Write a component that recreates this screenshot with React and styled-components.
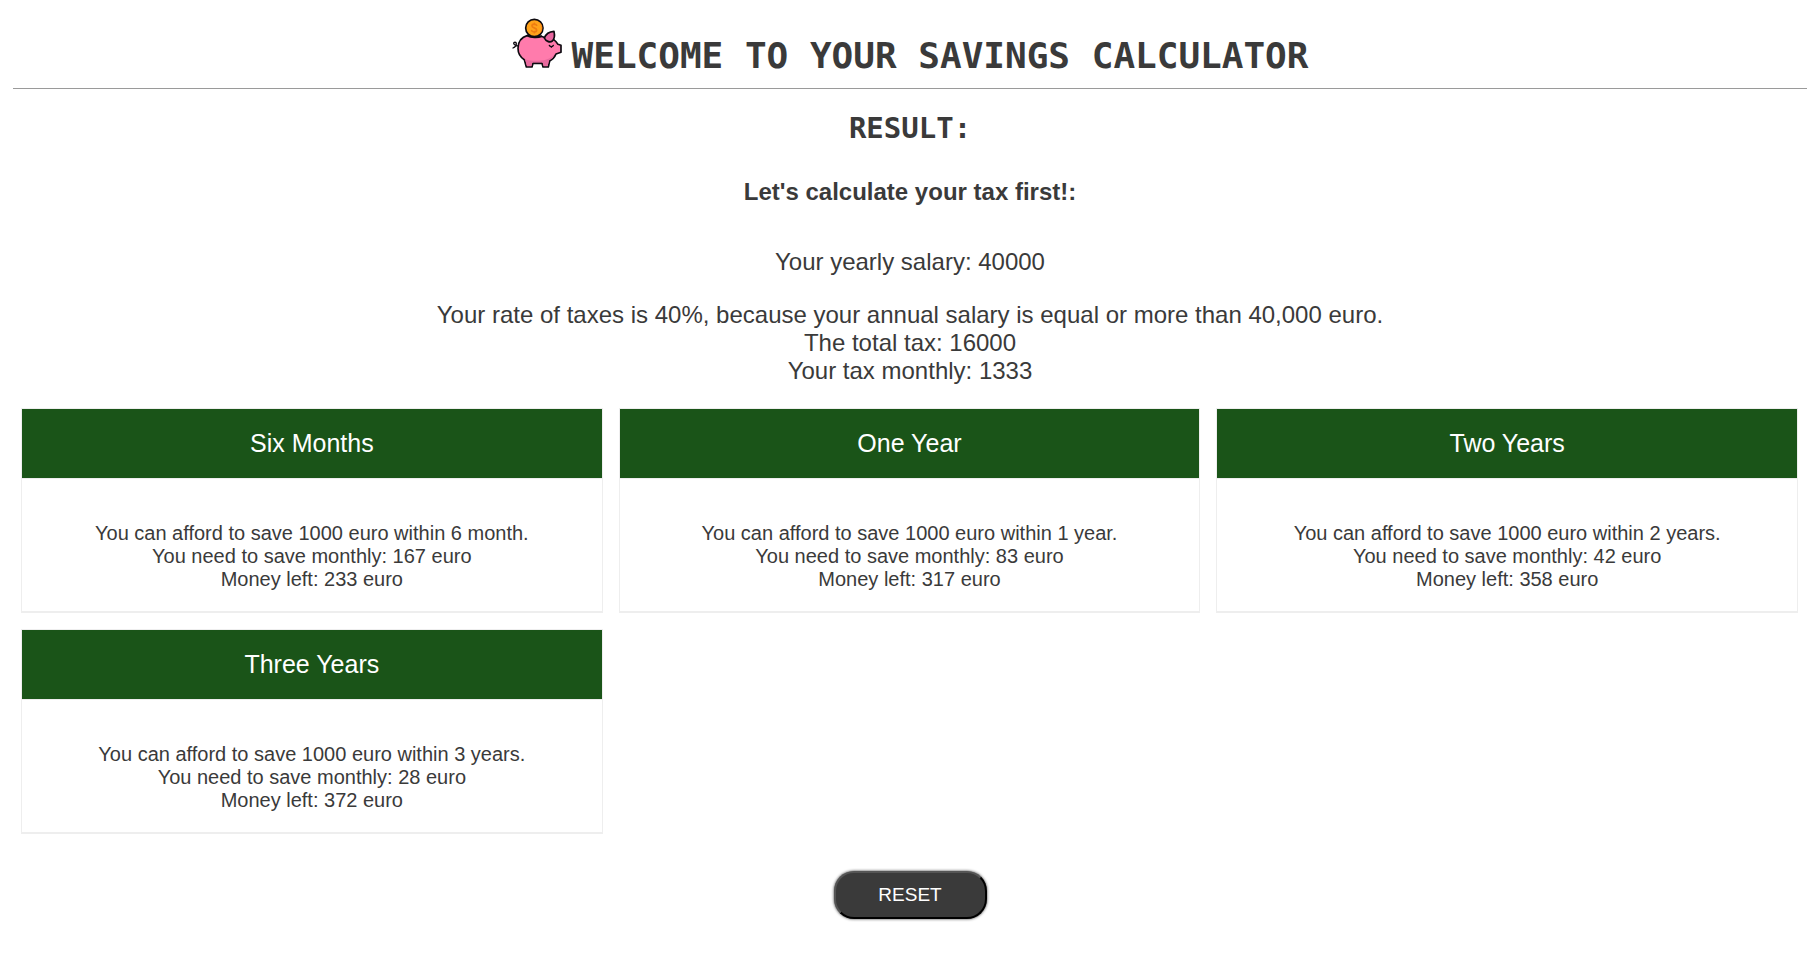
import React from 'react';
import styled, { createGlobalStyle } from 'styled-components';

const GlobalStyle = createGlobalStyle`
  * { box-sizing: border-box; }
  body {
    margin: 0;
    padding: 13px;
    background: #fff;
    color: #3a3a3a;
    font-family: 'Liberation Sans', Arial, sans-serif;
  }
`;

const Page = styled.main`
  text-align: center;
`;

const Header = styled.header`
  display: flex;
  align-items: baseline;
  justify-content: center;
  padding: 5px 0 10px;
  border-bottom: 1px solid #9a9a9a;
`;

const Title = styled.h1`
  margin: 0;
  font: bold 36px/44px 'DejaVu Sans Mono', monospace;
`;

const Pig = styled.svg`
  width: 60px;
  height: 50px;
  flex: none;
`;

const Result = styled.h2`
  margin: 21px 0 0;
  font: bold 29px/36px 'DejaVu Sans Mono', monospace;
`;

const Lead = styled.h3`
  margin: 32px 0 42px;
  font-size: 24px;
  line-height: 28px;
`;

const Text = styled.p`
  margin: 0;
  font-size: 24px;
  line-height: 28px;
`;

const TaxSummary = styled.section`
  display: grid;
  gap: 25px;
  margin-bottom: 23px;
`;

const Grid = styled.section`
  display: grid;
  grid-template-columns: repeat(3, 1fr);
  gap: 16px;
  padding: 0 9px 0 8px;
`;

const Card = styled.article`
  border: 1px solid #eee;
  border-bottom-width: 2px;
`;

const CardTitle = styled.h4`
  margin: 0;
  padding: 20px;
  border-bottom: 1px solid #eee;
  background: #1a5418;
  background-clip: padding-box;
  color: #fff;
  font-size: 25px;
  line-height: 29px;
  font-weight: 400;
`;

const CardText = styled.p`
  margin: 0;
  padding: 43px 20px 20px;
  font-size: 20px;
  line-height: 23px;
`;

const Reset = styled.button`
  display: block;
  margin: 37px auto 0;
  width: 153px;
  height: 48px;
  padding: 0;
  border: 2px solid;
  border-color: #555 #000 #000 #555;
  border-radius: 20px;
  background: #3a3a3a;
  box-shadow: 0 0 3px #333;
  color: #fff;
  font: 19px 'Liberation Sans', Arial, sans-serif;
`;

const plans = [
  ['Six Months', '6 month', 167, 233],
  ['One Year', '1 year', 83, 317],
  ['Two Years', '2 years', 42, 358],
  ['Three Years', '3 years', 28, 372],
];

function PiggyBank() {
  return (
    <Pig viewBox="36 39 180 150" aria-hidden="true" fill="none" stroke="#0d0a10" strokeWidth="5" strokeLinecap="round" strokeLinejoin="round">
      <path d="M55 122C49 124 41 119 41 115C41 111 49 110 49 116C49 122 43 127 39 129" strokeWidth="4" />
      <path
        d="M83 91C65 96 54 110 54 130C54 146 61 157 73 164L79 186H96L99 175H126L129 186H145L149 168C157 164 164 157 168 147L183 142V121L174 118C170 111 166 107 160 103L132 97C122 91 98 88 83 91Z"
        fill="#ff7bac"
      />
      <path d="M60 148C68 163 82 168 105 167C133 169 151 163 164 148C160 156 153 162 147 166L143 183H131L128 172H97L94 183H81L75 162C67 158 63 154 60 148Z" fill="#e86a9e" stroke="none" />
      <path d="M133 99C137 88 149 80 162 79C165 92 163 102 157 108C149 114 137 108 133 99Z" fill="#e8669f" />
      <path d="M148 121C151 126 157 126 160 121M154 125V127" strokeWidth="4" />
      <path d="M84 93C91 97 115 98 124 94" strokeWidth="6" />
      <circle cx="103" cy="69" r="26" fill="#ffa21a" />
      <path d="M116 50C127 61 128 78 114 90C123 85 128 77 127 67C126 59 122 53 116 50Z" fill="#ff8617" stroke="none" />
      <path d="M110 61C107 56 96 56 96 63C96 70 110 67 110 75C110 82 99 82 95 77M103 55V58M103 80V83" stroke="#ee7d12" />
    </Pig>
  );
}

export default function App() {
  return (
    <Page>
      <GlobalStyle />
      <Header>
        <PiggyBank />
        <Title>WELCOME TO YOUR SAVINGS CALCULATOR</Title>
      </Header>
      <Result>RESULT:</Result>
      <Lead>Let's calculate your tax first!:</Lead>
      <TaxSummary>
        <Text>Your yearly salary: 40000</Text>
        <Text>
          Your rate of taxes is 40%, because your annual salary is equal or more than 40,000 euro.<br />
          The total tax: 16000<br />
          Your tax monthly: 1333
        </Text>
      </TaxSummary>
      <Grid>
        {plans.map(([name, term, monthly, left]) => (
          <Card key={name}>
            <CardTitle>{name}</CardTitle>
            <CardText>
              You can afford to save 1000 euro within {term}.<br />
              You need to save monthly: {monthly} euro<br />
              Money left: {left} euro
            </CardText>
          </Card>
        ))}
      </Grid>
      <Reset type="button">RESET</Reset>
    </Page>
  );
}
